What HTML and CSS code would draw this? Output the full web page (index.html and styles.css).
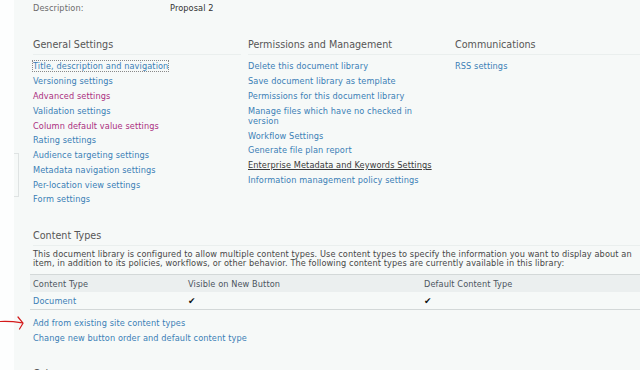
FILE: index.html
```html
<!DOCTYPE html>
<html lang="en">

<head>
    <meta charset="UTF-8">
    <title>Document Library Settings</title>
    <link rel="stylesheet" href="styles.css">
</head>

<body>
    <div class="page">
        <div class="leftnav">
            <div class="tree-line"></div>
        </div>

        <div class="main">
            <div class="desc-row">
                <span class="desc-label">Description:</span>
                <span class="desc-value">Proposal 2</span>
            </div>

            <div class="settings">
                <div class="col col-general">
                    <h3>General Settings</h3>
                    <ul>
                        <li><a href="#" class="focused">Title, description and navigation</a></li>
                        <li><a href="#">Versioning settings</a></li>
                        <li><a href="#" class="visited">Advanced settings</a></li>
                        <li><a href="#">Validation settings</a></li>
                        <li><a href="#" class="visited">Column default value settings</a></li>
                        <li><a href="#">Rating settings</a></li>
                        <li><a href="#">Audience targeting settings</a></li>
                        <li><a href="#">Metadata navigation settings</a></li>
                        <li><a href="#">Per-location view settings</a></li>
                        <li><a href="#">Form settings</a></li>
                    </ul>
                </div>
                <div class="col col-perm">
                    <h3>Permissions and Management</h3>
                    <ul>
                        <li><a href="#">Delete this document library</a></li>
                        <li><a href="#">Save document library as template</a></li>
                        <li><a href="#">Permissions for this document library</a></li>
                        <li><a href="#">Manage files which have no checked in version</a></li>
                        <li><a href="#">Workflow Settings</a></li>
                        <li><a href="#">Generate file plan report</a></li>
                        <li><a href="#" class="hover">Enterprise Metadata and Keywords Settings</a></li>
                        <li><a href="#">Information management policy settings</a></li>
                    </ul>
                </div>
                <div class="col col-comm">
                    <h3>Communications</h3>
                    <ul>
                        <li><a href="#">RSS settings</a></li>
                    </ul>
                </div>
            </div>

            <div class="section section-ct">
                <h3>Content Types</h3>
                <p class="intro-text">This document library is configured to allow multiple content types. Use content types to specify the information you want to display about an item, in addition to its policies, workflows, or other behavior. The following content types are currently available in this library:</p>
                <table class="ct-table">
                    <tr class="head">
                        <th class="c1">Content Type</th>
                        <th class="c2">Visible on New Button</th>
                        <th class="c3">Default Content Type</th>
                    </tr>
                    <tr>
                        <td class="c1"><a href="#">Document</a></td>
                        <td class="c2"><span class="check">&#10004;</span></td>
                        <td class="c3"><span class="check">&#10004;</span></td>
                    </tr>
                </table>
                <ul class="ct-links">
                    <li><a href="#">Add from existing site content types</a></li>
                    <li><a href="#">Change new button order and default content type</a></li>
                </ul>
            </div>

            <div class="section section-cols">
                <h3>Columns</h3>
            </div>
        </div>

        <svg class="arrow" width="26" height="16" viewBox="0 0 26 16">
            <path d="M0 5.5 Q9 4.8 22.5 6.8" fill="none" stroke="#d41a1a" stroke-width="1.2" stroke-linecap="round"/>
            <path d="M18 1 L23 7.2 L19.5 13" fill="none" stroke="#d41a1a" stroke-width="1.2" stroke-linecap="round" stroke-linejoin="round"/>
        </svg>
    </div>
</body>

</html>
```

FILE: styles.css
```css
html,
body {
    margin: 0;
    padding: 0;
    height: 100%;
    overflow: hidden;
}

body {
    font-family: "DejaVu Sans", Verdana, sans-serif;
    font-size: 8.2px;
    letter-spacing: 0.1px;
    background: #f6f9f8;
    color: #444;
}

.page {
    position: relative;
    display: flex;
    height: 370px;
    overflow: hidden;
}

a {
    color: #3b7fb6;
    text-decoration: none;
}

a.visited {
    color: #ab2f80;
}

a.hover {
    color: #3a3a3a;
    text-decoration: underline;
}

a.focused {
    outline: 1px dotted #888;
    outline-offset: 0;
}

ul {
    list-style: none;
    margin: 0;
    padding: 0;
}

/* left white strip */
.leftnav {
    width: 14px;
    flex: none;
    background: #fdfefe;
}

.tree-line {
    margin-top: 153px;
    margin-left: 14px;
    width: 4px;
    height: 42px;
    border-top: 1px solid #dfe3e3;
    border-bottom: 1px solid #dfe3e3;
    border-right: 1px solid #dfe3e3;
}

.main {
    flex: 1;
    padding-left: 19px;
}

.desc-row {
    display: flex;
    padding-top: 3px;
    line-height: 11px;
}

.desc-label {
    width: 137px;
    color: #6c6c6c;
}

.desc-value {
    color: #333;
}

.settings {
    display: flex;
    margin-top: 24px;
}

.col h3,
.section h3 {
    margin: 0;
    font-size: 9.6px;
    font-weight: normal;
    letter-spacing: 0;
    color: #565656;
    line-height: 13px;
    padding-bottom: 3px;
    border-bottom: 1px solid #eaefee;
}

.col ul {
    padding-top: 4px;
}

.col li {
    line-height: 10px;
    padding: 2.4px 0;
}

.col-general {
    width: 215px;
}

.col-general h3 {
    margin-right: 7px;
}

.col-perm {
    width: 207px;
}

.col-perm li {
    padding-right: 16px;
}

.col-comm {
    flex: 1;
}

.section-ct {
    margin-top: 22px;
}

.section-cols {
    margin-top: 22px;
}

.section-cols h3 {
    border-bottom: none;
}

.intro-text {
    margin: 4px 0 0;
    line-height: 9.6px;
    color: #474747;
    padding-right: 4px;
}

.ct-table {
    border-collapse: collapse;
    width: calc(100% + 3px);
    margin-left: -3px;
    margin-top: 5px;
}

.ct-table th,
.ct-table td {
    text-align: left;
    font-weight: normal;
    padding: 0 0 0 3px;
    height: 17px;
}

.ct-table .head {
    background: #ebefef;
    border-top: 1px solid #d3d8d8;
    color: #4b5560;
}

.ct-table tr:last-child {
    border-bottom: 1px solid #d3d8d8;
}

.ct-table .c1 {
    width: 152px;
}

.ct-table .c2 {
    width: 233px;
}

.check {
    color: #111;
    font-size: 9px;
}

.ct-links {
    padding-top: 5px;
}

.ct-links li {
    line-height: 10px;
    padding: 2.5px 0;
}

.arrow {
    position: absolute;
    left: 0;
    top: 316px;
}
```
